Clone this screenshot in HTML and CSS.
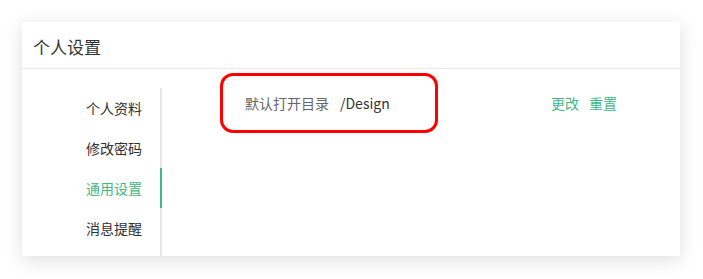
FILE: index.html
```html
<!DOCTYPE html>
<html lang="zh">
<head>
<meta charset="utf-8">
<link rel="stylesheet" href="styles.css">
</head>
<body>
<div class="card">
  <div class="card-header">个人设置</div>
  <div class="card-body">
    <ul class="menu">
      <li class="menu-item">个人资料</li>
      <li class="menu-item">修改密码</li>
      <li class="menu-item active">通用设置</li>
      <li class="menu-item">消息提醒</li>
    </ul>
    <div class="content">
      <div class="row">
        <span class="label">默认打开目录</span>
        <span class="value">/Design</span>
        <span class="actions"><a class="link">更改</a><a class="link">重置</a></span>
      </div>
    </div>
  </div>
  <div class="highlight"></div>
</div>
</body>
</html>
```
FILE: styles.css
```css
html, body {
  margin: 0;
  padding: 0;
  background: #fff;
}
body {
  box-sizing: border-box;
  min-height: 279px;
  padding: 22px 23px 23px 22px;
  font-family: "Noto Sans CJK SC", "Open Sans", sans-serif;
  color: #333;
}
.card {
  position: relative;
  width: 658px;
  height: 234px;
  background: #fff;
  box-shadow: 0 4px 18px rgba(0, 0, 0, 0.13);
  display: flex;
  flex-direction: column;
}
.card-header {
  height: 46px;
  border-bottom: 1px solid #e8e8e8;
  padding-left: 11px;
  font-size: 17px;
  line-height: 50px;
  color: #333;
}
.card-body {
  flex: 1;
  display: flex;
  padding-top: 19px;
  min-height: 0;
}
.menu {
  list-style: none;
  margin: 0;
  padding: 0;
  width: 138px;
  border-right: 2px solid #e4e7ed;
}
.menu-item {
  height: 40px;
  line-height: 40px;
  text-align: right;
  padding-right: 18px;
  font-size: 14px;
  color: #303133;
  box-sizing: border-box;
}
.menu-item.active {
  color: #42b983;
  border-right: 2px solid #42b983;
  width: 140px;
}
.content {
  flex: 1;
  padding: 0 63px 0 83px;
}
.row {
  display: flex;
  align-items: center;
  height: 30px;
  font-size: 14px;
}
.label {
  color: #666;
}
.value {
  margin-left: 11px;
  color: #333;
}
.actions {
  margin-left: auto;
  display: flex;
  gap: 10px;
}
.link {
  color: #42b983;
  cursor: pointer;
}
.highlight {
  position: absolute;
  left: 198px;
  top: 51px;
  width: 212px;
  height: 54px;
  border: 3px solid #ff0000;
  border-radius: 13px;
}
```
